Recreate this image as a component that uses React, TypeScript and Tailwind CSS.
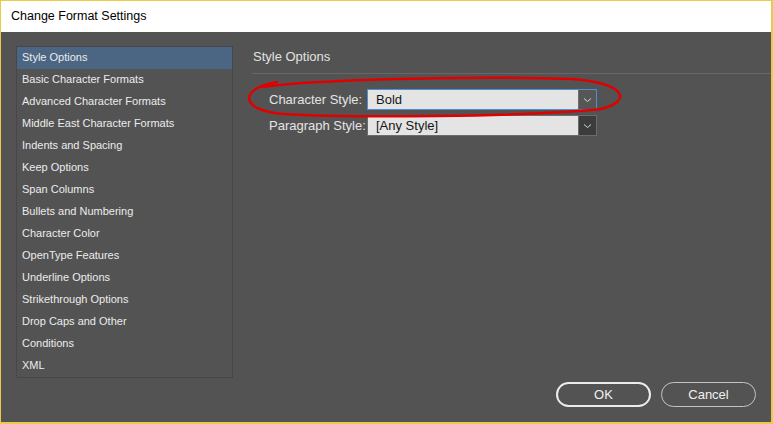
const items = [
  "Style Options",
  "Basic Character Formats",
  "Advanced Character Formats",
  "Middle East Character Formats",
  "Indents and Spacing",
  "Keep Options",
  "Span Columns",
  "Bullets and Numbering",
  "Character Color",
  "OpenType Features",
  "Underline Options",
  "Strikethrough Options",
  "Drop Caps and Other",
  "Conditions",
  "XML",
];

function Chevron() {
  return (
    <svg width="9" height="6" viewBox="0 0 9 6" fill="none">
      <path d="M1 1.5 L4.5 4.5 L8 1.5" stroke="#d8d8d8" strokeWidth="1" />
    </svg>
  );
}

function Select({ value, focused }: { value: string; focused?: boolean }) {
  return (
    <div
      className={`flex h-[21px] w-[230px] border ${
        focused ? "border-[#4b8fd8]" : "border-[#6c6c6c]"
      }`}
    >
      <div className="flex flex-1 items-center bg-[#e4e4e4] pl-[8px] text-[13px] text-[#161616]">
        {value}
      </div>
      <div
        className={`flex w-[18px] items-center justify-center border-l border-[#6c6c6c] ${
          focused ? "bg-[#565656]" : "bg-[#3c3c3c]"
        }`}
      >
        <Chevron />
      </div>
    </div>
  );
}

export default function App() {
  return (
    <div
      className="relative flex h-[424px] w-[773px] flex-col overflow-hidden border-t border-l border-r-2 border-b-2 border-[#ebc94a] bg-[#535353]"
      style={{ fontFamily: '"Liberation Sans", Arial, sans-serif' }}
    >
      {/* Title bar */}
      <div className="flex h-[31px] items-center bg-white pl-[10px] text-[12.5px] text-black">
        Change Format Settings
      </div>

      <div className="flex flex-1">
        {/* Category list */}
        <div className="pl-[15px] pt-[14px]">
          <div className="w-[217px] border border-[#474747]">
            {items.map((it, i) => (
              <div
                key={it}
                className={`flex h-[22px] items-center pb-[2px] pl-[5px] text-[11px] text-[#ececec] ${
                  i === 0 ? "bg-[#4b6682]" : ""
                }`}
              >
                {it}
              </div>
            ))}
          </div>
        </div>

        {/* Options */}
        <div className="ml-[19px] flex flex-1 flex-col">
          <div className="mt-[17px] pl-px text-[13px] leading-[16px] text-[#e2e2e2]">
            Style Options
          </div>
          <div className="mt-[8px] h-px bg-[#676767]" />

          <div className="mt-[15px] flex flex-col gap-[5px] pl-[17px] text-[13px] text-[#e4e4e4]">
            <div className="flex items-center">
              <span className="w-[98px]">Character Style:</span>
              <Select value="Bold" focused />
            </div>
            <div className="flex items-center">
              <span className="w-[98px]">Paragraph Style:</span>
              <Select value="[Any Style]" />
            </div>
          </div>

          <div className="mt-auto flex justify-end gap-[10px] pb-[15px] pr-[15px]">
            <button className="h-[25px] w-[95px] rounded-full border-2 border-[#ececec] text-[13px] text-[#f0f0f0]">
              OK
            </button>
            <button className="h-[25px] w-[95px] rounded-full border border-[#c4c4c4] text-[13px] text-[#f0f0f0]">
              Cancel
            </button>
          </div>
        </div>
      </div>

      {/* Red annotation ellipse */}
      <svg
        className="pointer-events-none absolute left-0 top-0"
        width="773"
        height="424"
        viewBox="0 0 773 424"
      >
        <path
          d="M262 86 C300 80 450 74 570 78 C625 82 632 100 600 108 C520 116 350 117 282 113 C240 110 236 88 276 81"
          fill="none"
          stroke="#e10000"
          strokeWidth="2.5"
          strokeLinecap="round"
        />
      </svg>
    </div>
  );
}
